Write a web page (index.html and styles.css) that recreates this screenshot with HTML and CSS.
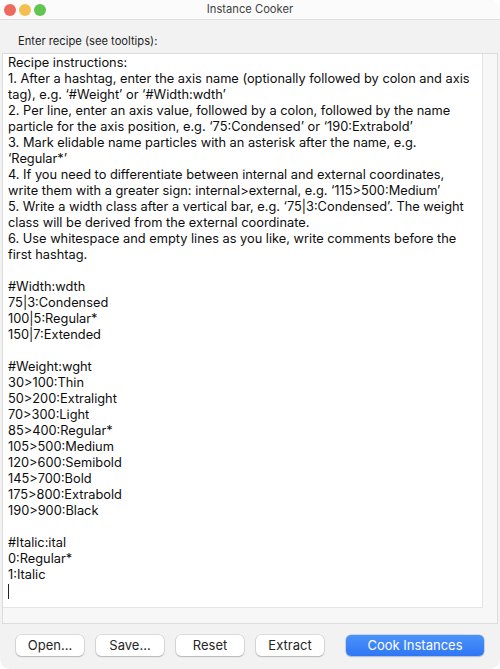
FILE: index.html
```html
<!DOCTYPE html>
<html>
<head>
<meta charset="utf-8">
<link rel="stylesheet" href="styles.css">
</head>
<body>
<div class="window">
  <div class="titlebar">
    <div class="lights">
      <span class="light red"></span>
      <span class="light yellow"></span>
      <span class="light green"></span>
    </div>
    <div class="title">Instance Cooker</div>
  </div>
  <div class="label">Enter recipe (see tooltips):</div>
  <div class="scroll">
    <div class="editor"><div class="line">Recipe instructions:</div><div class="line">1. After a hashtag, enter the axis name (optionally followed by colon and axis</div><div class="line">tag), e.g. ‘#Weight’ or ‘#Width:wdth’</div><div class="line">2. Per line, enter an axis value, followed by a colon, followed by the name</div><div class="line">particle for the axis position, e.g. ‘75:Condensed’ or ‘190:Extrabold’</div><div class="line">3. Mark elidable name particles with an asterisk after the name, e.g.</div><div class="line">‘Regular*’</div><div class="line">4. If you need to differentiate between internal and external coordinates,</div><div class="line">write them with a greater sign: internal&gt;external, e.g. ‘115&gt;500:Medium’</div><div class="line">5. Write a width class after a vertical bar, e.g. ‘75|3:Condensed’. The weight</div><div class="line">class will be derived from the external coordinate.</div><div class="line">6. Use whitespace and empty lines as you like, write comments before the</div><div class="line">first hashtag.</div><div class="line"> </div><div class="line">#Width:wdth</div><div class="line">75|3:Condensed</div><div class="line">100|5:Regular*</div><div class="line">150|7:Extended</div><div class="line"> </div><div class="line">#Weight:wght</div><div class="line">30&gt;100:Thin</div><div class="line">50&gt;200:Extralight</div><div class="line">70&gt;300:Light</div><div class="line">85&gt;400:Regular*</div><div class="line">105&gt;500:Medium</div><div class="line">120&gt;600:Semibold</div><div class="line">145&gt;700:Bold</div><div class="line">175&gt;800:Extrabold</div><div class="line">190&gt;900:Black</div><div class="line"> </div><div class="line">#Italic:ital</div><div class="line">0:Regular*</div><div class="line">1:Italic</div><div class="line"><span class="caret"></span></div></div>
    <div class="vtrack"></div>
    <div class="htrack"></div>
    <div class="corner"></div>
  </div>
  <div class="buttons">
    <button class="btn">Open...</button>
    <button class="btn">Save...</button>
    <button class="btn">Reset</button>
    <button class="btn">Extract</button>
    <button class="btn primary">Cook Instances</button>
  </div>
</div>
</body>
</html>
```

FILE: styles.css
```css
* { box-sizing: border-box; }
html, body { margin: 0; padding: 0; background: #ffffff; }
body { font-family: "Inter", "Noto Sans", sans-serif; }

.window {
  width: 500px;
  height: 669px;
  background: #f2f2f2;
  border-radius: 10px;
  overflow: hidden;
  display: flex;
  flex-direction: column;
}

.titlebar {
  height: 20px;
  flex: none;
  background: #fbfbfb;
  border-bottom: 1px solid #dedede;
  position: relative;
  display: flex;
  align-items: center;
  justify-content: center;
}
.lights {
  position: absolute;
  left: 4px;
  top: 4px;
  display: flex;
  gap: 3px;
}
.light {
  width: 12px;
  height: 12px;
  border-radius: 50%;
  display: block;
}
.light.red { background: #ec6a5e; }
.light.yellow { background: #f4bf4f; }
.light.green { background: #61c554; }
.title {
  font-size: 11.2px;
  color: #3f3f3f;
  line-height: 19px;
}

.label {
  flex: none;
  height: 33px;
  padding: 14px 0 0 18px;
  font-size: 11.2px;
  line-height: 15px;
  color: #1e1e1e;
}

.scroll {
  flex: none;
  margin: 0 2px;
  height: 571px;
  border: 1px solid #dcdcdc;
  display: grid;
  grid-template-columns: 1fr 14px;
  grid-template-rows: 1fr 15px;
  background: #f6f6f6;
}
.editor {
  background: #ffffff;
  padding: 1px 0 0 5px;
  font-size: 12.8px;
  line-height: 16px;
  color: #0d0d0d;
  overflow: hidden;
  border-right: 1px solid #e4e4e4;
  border-bottom: 1px solid #e4e4e4;
}
.line {
  white-space: pre;
  height: 16px;
}
.caret {
  display: inline-block;
  width: 1px;
  height: 15px;
  background: #222;
  vertical-align: top;
  margin-top: 1px;
}
.vtrack { background: #f7f7f7; }
.htrack { background: #f7f7f7; }
.corner { background: #f7f7f7; }

.buttons {
  flex: none;
  display: flex;
  gap: 12px;
  padding: 11px 16px 0 16px;
}
.btn {
  width: 68px;
  height: 21px;
  border: none;
  border-radius: 5px;
  background: #ffffff;
  box-shadow: 0 0 0 0.5px rgba(0,0,0,0.18), 0 1px 1.5px rgba(0,0,0,0.18);
  font-family: "Inter", "Noto Sans", sans-serif;
  font-size: 13px;
  color: #262626;
  padding: 0;
  line-height: 21px;
}
.btn.primary {
  width: 138px;
  margin-left: 10px;
  background: linear-gradient(#4b93f8, #2f76f5);
  color: #ffffff;
  box-shadow: 0 0 0 0.5px rgba(0,60,200,0.3), 0 1px 1.5px rgba(0,0,0,0.15);
}
```
